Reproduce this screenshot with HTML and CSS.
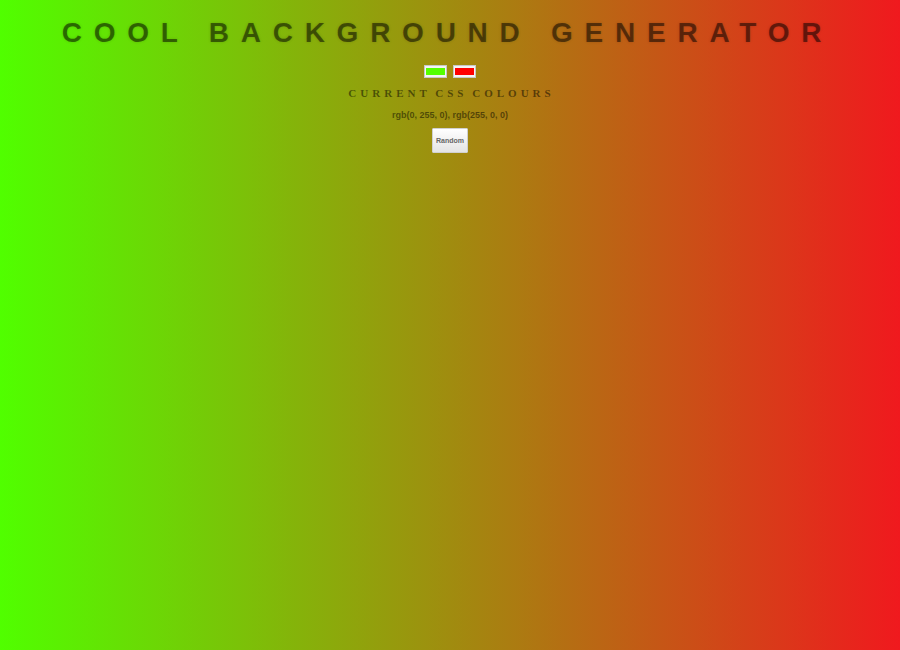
FILE: index.html
```html
<!DOCTYPE html>
<html>
<head>
<meta charset="utf-8">
<title>Background Generator</title>
<link rel="stylesheet" href="styles.css">
</head>
<body class="page">
  <h1 class="title">Cool Background Generator</h1>
  <div class="pickers">
    <span class="swatch"><span class="swatch-fill swatch-green"></span></span>
    <span class="swatch"><span class="swatch-fill swatch-red"></span></span>
  </div>
  <h2 class="subtitle">Current CSS Colours</h2>
  <p class="values">rgb(0, 255, 0), rgb(255, 0, 0)</p>
  <button class="random">Random</button>
</body>
</html>
```
FILE: styles.css
```css
html {
  height: 100%;
}
.page {
  margin: 0;
  min-height: 100%;
  background: linear-gradient(to right, #50ff00, #f0191e);
  text-align: center;
  color: rgba(0, 0, 0, 0.5);
  display: flex;
  flex-direction: column;
  align-items: center;
}
.title {
  margin: 17px 0 0 0;
  font-family: "Liberation Sans", Arial, sans-serif;
  font-weight: bold;
  font-size: 28px;
  line-height: 32px;
  letter-spacing: 11.75px;
  padding-right: 5px;
  text-transform: uppercase;
  text-shadow: 0 0 3px rgba(0, 0, 0, 0.15);
}
.pickers {
  margin-top: 16px;
  display: flex;
  gap: 6px;
}
.swatch {
  display: block;
  padding: 2px 1px;
  background: #f4f4f4;
  border: 1px solid #c8c8c8;
}
.swatch-fill {
  display: block;
  width: 19px;
  height: 7px;
}
.swatch-green { background: #55ff00; }
.swatch-red { background: #ff0000; }
.subtitle {
  margin: 8px 0 0 0;
  font-family: "Liberation Serif", "Times New Roman", serif;
  font-weight: bold;
  font-size: 11px;
  line-height: 14px;
  letter-spacing: 4px;
  word-spacing: -2px;
  padding-left: 3px;
  text-transform: uppercase;
}
.values {
  margin: 9px 0 0 0;
  font-family: "Liberation Sans", Arial, sans-serif;
  font-weight: bold;
  font-size: 9px;
  line-height: 12px;
}
.random {
  margin-top: 7px;
  width: 36px;
  height: 25px;
  padding: 0;
  font-family: "Liberation Sans", Arial, sans-serif;
  font-weight: bold;
  font-size: 7px;
  color: #666;
  background: linear-gradient(#ffffff, #e4e4e4);
  border: 1px solid #d0d0d0;
  border-radius: 1px;
}
```
